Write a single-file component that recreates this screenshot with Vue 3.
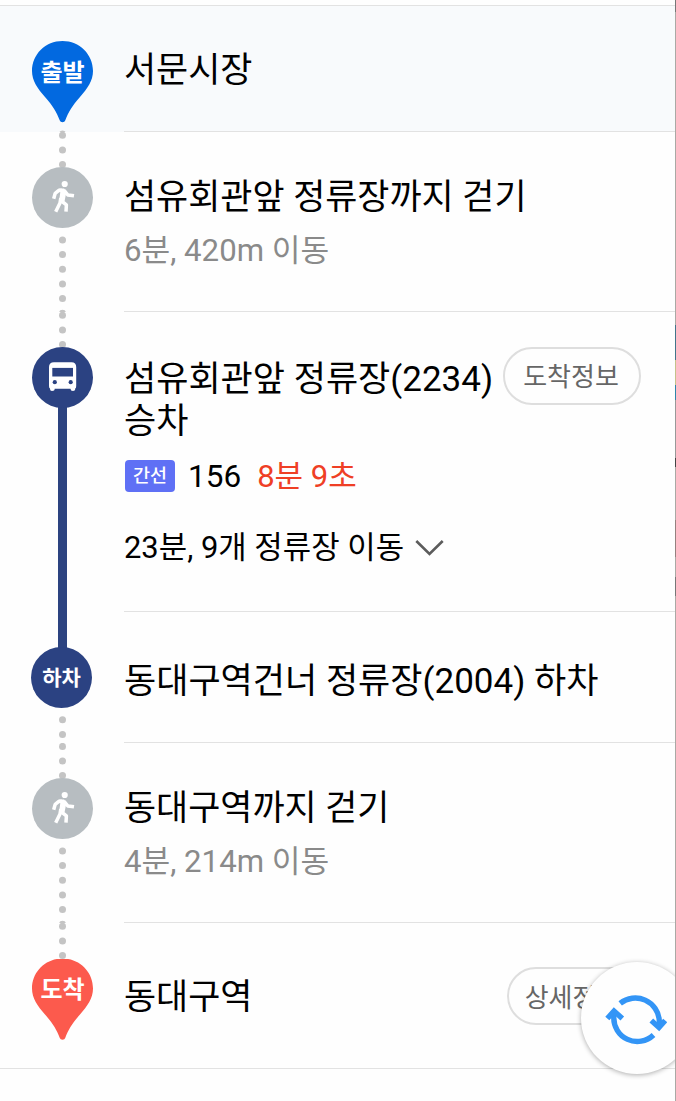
<script setup>
const steps = [
  { id: 'start', icon: 'pin', label: '출발', title: '서문시장', dots: [128] },
  { id: 'walk-a', icon: 'walk', title: '섬유회관앞 정류장까지 걷기', sub: '6분, 420m 이동', dots: [3.2, 18, 32.6, 108, 122.6, 137.3, 152, 166.5, 181.2] },
  { id: 'ride', icon: 'bus', title: '섬유회관앞 정류장(2234) 승차', chip: '도착정보', dots: [3.2, 18, 32.5], line: true },
  { id: 'off', icon: 'off', label: '하차', title: '동대구역건너 정류장(2004) 하차', dots: [107.8, 122.4], lineIn: true },
  { id: 'walk-b', icon: 'walk', title: '동대구역까지 걷기', sub: '4분, 214m 이동', dots: [3.4, 18, 32.6, 108, 122.6, 137.3, 152, 166.5, 181.2] },
  { id: 'end', icon: 'pin', label: '도착', title: '동대구역', chip: '상세정보', dots: [3.2, 18, 32.6] },
]
</script>

<template>
  <div class="page">
    <main class="route">
      <section v-for="s in steps" :key="s.id" class="step" :class="s.id">
        <div class="rail">
          <svg class="track" width="61" height="100%">
            <circle v-for="y in s.dots" :key="y" cx="30.5" :cy="y" r="3.5" fill="#c4c4c4" />
            <rect v-if="s.line" x="26" y="60" width="9" height="240" fill="#2c4380" />
            <rect v-if="s.lineIn" x="26" y="0" width="9" height="40" fill="#2c4380" />
          </svg>
          <div class="marker">
            <svg v-if="s.icon === 'pin'" width="61" height="82" viewBox="0 0 61 82">
              <path class="pin-shape" d="M30.5 0C47.5 0 61 13.3 61 30C61 39.5 55.5 47.5 48 56C40 65 36.5 71 33.2 79.5Q32.7 81.3 30.5 81.3Q28.3 81.3 27.8 79.5C24.5 71 21 65 13 56C5.5 47.5 0 39.5 0 30C0 13.3 13.5 0 30.5 0Z" />
            </svg>
            <svg v-else width="61" height="61" viewBox="0 0 61 61">
              <circle cx="30.5" cy="30.5" r="30.5" :fill="s.icon === 'walk' ? '#b7bdc1' : '#2b4282'" />
              <g v-if="s.icon === 'walk'" fill="none" stroke="#fff" stroke-width="3.5" stroke-linejoin="round">
                <circle cx="32.7" cy="17" r="3.1" fill="#fff" stroke="none" />
                <path d="M26.5 21.4L32 21.4L34.6 24L32.6 34L27 35L28.3 25Z" fill="#fff" stroke="none" />
                <path d="M30 23.2L26.5 23.6L23.2 26.3L21.7 31.7" />
                <path d="M32 23.5L35.8 27.9L42 28.8" />
                <path d="M28.8 31L28 36L23.7 44.7" />
                <path d="M29.5 34L34.4 37.8L34 44.7" />
              </g>
              <g v-else-if="s.icon === 'bus'">
                <path fill="#fff" d="M22 15.2H39.5Q44.2 15.2 44.2 20V39Q44.2 41 43.2 41.5V42.3Q43.2 44 41 44Q38.5 44 38.5 41.8H22.7Q22.7 44 20 44Q18 44 18 42V41.5Q17 41 17 39V20Q17 15.2 22 15.2Z" />
                <rect x="20.3" y="20.9" width="20.7" height="8.6" fill="#2b4282" />
                <circle cx="22.8" cy="35.2" r="2.1" fill="#2b4282" />
                <circle cx="38.7" cy="35.2" r="2.1" fill="#2b4282" />
              </g>
            </svg>
            <span v-if="s.label" class="label">{{ s.label }}</span>
          </div>
        </div>
        <div class="body">
          <div class="head">
            <h2>{{ s.title }}</h2>
            <span v-if="s.chip" class="chip">{{ s.chip }}</span>
          </div>
          <p v-if="s.sub" class="sub">{{ s.sub }}</p>
          <template v-if="s.line">
            <div class="bus-info">
              <span class="badge">간선</span>
              <span class="number">156</span>
              <span class="eta">8분 9초</span>
            </div>
            <div class="stops">
              <span>23분, 9개 정류장 이동</span>
              <svg width="29" height="18" viewBox="0 0 29 18">
                <path d="M1.3 2L14.5 15L27.7 2" fill="none" stroke="#5c5c5c" stroke-width="2.6" />
              </svg>
            </div>
          </template>
        </div>
      </section>
      <button class="refresh" aria-label="새로고침">
        <svg width="62" height="54" viewBox="0 0 62 54" fill="none" stroke="#3395f6" stroke-width="5.4">
          <path d="M15.2 10.4A24 24 0 0 1 54.3 28V33" />
          <path d="M46.3 27.5L54 34.5L60.2 27.5" />
          <path d="M48.5 42A23.5 23.5 0 0 1 8.8 24V19" />
          <path d="M2.3 25.5L9 18L17.3 25.5" />
        </svg>
      </button>
    </main>
    <div class="edge"></div>
  </div>
</template>

<style>
body { margin: 0; background: #fefefe; overflow: hidden; }
</style>

<style scoped>
.page {
  display: flex;
  width: 676px;
  height: 1101px;
  overflow: hidden;
  background: #fefefe;
  color: #000;
  font-family: Roboto, "Noto Sans CJK KR", sans-serif;
}
.route {
  position: relative;
  width: 675px;
  height: 1096px;
  margin-top: 5px;
  overflow: hidden;
  border-top: 1px solid #e2e2e2;
  box-sizing: border-box;
}
.edge {
  width: 1px;
  background: linear-gradient(#777 0 12px, #aaa9a5 12px 325px, #42758a 325px 360px, #c5c28a 360px 385px, #2e86aa 385px 400px, #999 400px 458px, #444 458px 467px, #aaa9a5 467px 520px, #95817f 520px 557px, #aaa9a5 557px 577px, #777 577px 596px, #aaa9a5 596px);
}
.step { display: flex; box-sizing: border-box; }
.start { height: 126px; background: #f8fafc; }
.walk-a, .walk-b { height: 180px; }
.ride { height: 300px; }
.off { height: 131px; }
.end { height: 146px; border-bottom: 1px solid #e2e2e2; }
.rail {
  display: grid;
  grid-template-rows: 100%;
  width: 124px;
  padding-left: 32px;
  box-sizing: border-box;
  flex: none;
}
.track, .marker { grid-area: 1 / 1; }
.track { display: block; height: 100%; overflow: hidden; }
.marker {
  display: grid;
  justify-items: center;
  align-items: start;
  width: 61px;
  height: 61px;
  margin-top: 35px;
}
.marker > * { grid-area: 1 / 1; }
.marker svg { display: block; }
.off .marker { margin-left: -1px; }
.label {
  color: #fff;
  font-weight: 700;
  font-size: 24px;
  line-height: 61px;
  padding-top: 2px;
}
.end .marker { margin-top: 36px; }
.end .label { padding-top: 1px; }
.off .label { font-size: 21px; padding-top: 1px; }
.start .pin-shape { fill: #0269e0; }
.end .pin-shape { fill: #fc5a4d; transform: translateY(-0.5px); }
.body {
  flex: 1;
  min-width: 0;
  box-sizing: border-box;
  border-bottom: 1px solid #e2e2e2;
  padding-top: 45px;
}
.start .body { padding-top: 44px; }
.end .body { border-bottom: 0; }
.head { display: flex; align-items: flex-start; }
h2 {
  margin: 0;
  font-size: 34.9px;
  line-height: 42px;
  font-weight: 400;
  white-space: nowrap;
}
.ride h2 { width: 379px; white-space: normal; word-break: keep-all; }
.ride h2, .off h2 { font-size: 35px; }
.ride .body { padding-top: 47px; }
.off .body { padding-top: 49px; }
.end .body { padding-top: 54px; }
.chip {
  box-sizing: border-box;
  width: 138px;
  height: 58px;
  margin-top: -12px;
  padding: 1px 2px 0 0;
  border: 2px solid #dedede;
  border-radius: 29px;
  color: #666;
  font-size: 26px;
  line-height: 54px;
  text-align: center;
  white-space: nowrap;
  flex: none;
}
.end .chip { margin: -10px 30px 0 auto; padding: 2px 7px 0 0; }
.sub {
  margin: 14px 0 0;
  color: #8a8a8a;
  font-size: 31.2px;
  line-height: 36px;
}
.bus-info {
  display: flex;
  align-items: center;
  height: 40px;
  margin-top: 13px;
  font-size: 31px;
  line-height: 40px;
}
.badge {
  width: 50px;
  height: 32px;
  border-radius: 4px;
  background: #5f70f5;
  color: #fff;
  font-size: 18.5px;
  font-weight: 500;
  line-height: 32px;
  text-align: center;
  margin-left: 1px;
}
.number { margin-left: 13px; font-size: 31.5px; padding-top: 1px; }
.eta { margin-left: 16px; color: #ef3f25; padding-top: 1px; }
.stops span { margin-top: -6px; }
.stops {
  display: flex;
  align-items: center;
  height: 40px;
  margin-top: 31px;
  font-size: 30.9px;
}
.stops svg { margin-left: 11px; margin-top: 2px; }
.refresh {
  position: absolute;
  left: 581px;
  top: 956px;
  width: 112px;
  height: 112px;
  display: flex;
  align-items: center;
  padding: 0 0 0 24px;
  border: 0;
  border-radius: 50%;
  background: #fefefe;
  box-shadow: 0 1px 5px rgba(0, 0, 0, 0.32);
}
.refresh svg { flex: none; margin-top: 4px; }
</style>
